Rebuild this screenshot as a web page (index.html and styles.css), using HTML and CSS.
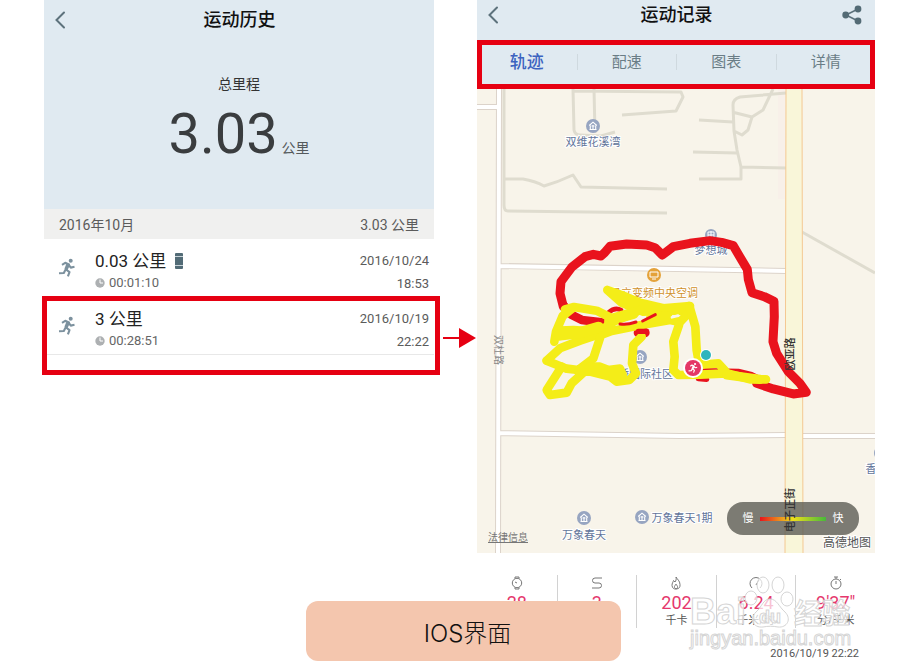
FILE: index.html
```html
<!DOCTYPE html>
<html lang="zh-CN">
<head>
<meta charset="utf-8">
<title>运动历史</title>
<link rel="stylesheet" href="styles.css">
</head>
<body>
<svg class="defs" aria-hidden="true">
  <defs>
    <symbol id="back" viewBox="0 0 12 18"><path d="M10 1.5 2.5 9l7.5 7.5" fill="none" stroke="#5d727c" stroke-width="2" stroke-linecap="round"/></symbol>
    <symbol id="runner" viewBox="0 0 18 20">
      <circle cx="12.7" cy="2.8" r="2" fill="currentColor"/>
      <path d="M4 6.8 7.2 4.8 11 6.5 8 11.5l3.5 2.7-1.6 4.2M10.8 7l2 2.6 3.7-.8M7.6 11.6 5.8 15 1 15.2" fill="none" stroke="currentColor" stroke-width="2.1" stroke-linejoin="round"/>
      <path d="M10 6.500 8 11.500" stroke="currentColor" stroke-width="3.400"/>
    </symbol>
    <symbol id="clock" viewBox="0 0 10 10"><circle cx="5" cy="5" r="4.7" fill="#adb0b2"/><path d="M5 1.5V5h3" fill="none" stroke="#fff" stroke-width="1"/></symbol>
    <symbol id="home" viewBox="0 0 14 14">
      <circle cx="7" cy="7" r="7" fill="#97a5c1"/>
      <path d="M3.2 6.5 7 3.2l3.8 3.3M4.3 6.5v4M7 6v4.500M9.700 6.500v4M3.500 10.500h7M5.500 7h3" fill="none" stroke="#fff" stroke-width="1.1"/>
    </symbol>
  </defs>
</svg>
<main class="stage">
  <section class="phone history">
    <div class="summary">
      <header class="bar">
        <button class="icon-button" aria-label="返回"><svg class="back"><use href="#back"/></svg></button>
        <h1>运动历史</h1>
        <span></span>
      </header>
      <p class="caption">总里程</p>
      <p class="total"><strong>3.03</strong> <span>公里</span></p>
    </div>
    <div class="month"><span>2016年10月</span><span>3.03 公里</span></div>
    <ul class="runs">
      <li class="run">
        <svg class="runner"><use href="#runner"/></svg>
        <div class="info">
          <p class="distance">0.03 公里
            <svg class="band" viewBox="0 0 8 16"><rect width="8" height="16" rx="1" fill="#526b76"/><path d="M0 3.500h8M0 12.500h8" stroke="#c8d3d8"/></svg>
          </p>
          <p class="time"><svg class="clock"><use href="#clock"/></svg>00:01:10</p>
        </div>
        <div class="when"><p class="date">2016/10/24</p><p class="hour">18:53</p></div>
      </li>
      <li class="run marked">
        <svg class="runner"><use href="#runner"/></svg>
        <div class="info">
          <p class="distance">3 公里</p>
          <p class="time"><svg class="clock"><use href="#clock"/></svg>00:28:51</p>
        </div>
        <div class="when"><p class="date">2016/10/19</p><p class="hour">22:22</p></div>
      </li>
    </ul>
  </section>

  <div class="link">
    <svg class="arrow" viewBox="0 0 33 20"><path d="M0 10h17" stroke="#e60012" stroke-width="2"/><path d="M16 0v20l17-10z" fill="#e60012"/></svg>
  </div>

  <section class="phone record">
    <header class="bar bar-record">
      <button class="icon-button" aria-label="返回"><svg class="back"><use href="#back"/></svg></button>
      <h2>运动记录</h2>
      <button class="icon-button" aria-label="分享">
        <svg class="share" viewBox="0 0 20 20"><path d="M16 4 4 10l12 6" fill="none" stroke="#5d727c" stroke-width="1.600"/><g fill="#536b75"><circle cx="16" cy="4" r="3.400"/><circle cx="3.700" cy="10" r="3.400"/><circle cx="16" cy="16" r="3.400"/></g></svg>
      </button>
    </header>
    <nav class="tabs">
      <button class="tab active">轨迹</button>
      <button class="tab">配速</button>
      <button class="tab">图表</button>
      <button class="tab">详情</button>
    </nav>
    <svg class="map" viewBox="477 89 398 464">
      <defs>
        <linearGradient id="speed"><stop offset="0" stop-color="#e8141c"/><stop offset=".5" stop-color="#efe01a"/><stop offset="1" stop-color="#46b93a"/></linearGradient>
      </defs>
      <rect x="477" y="89" width="398" height="464" fill="#f8f4ea"/>
      <rect x="778" y="89" width="7" height="110" fill="#f8f0e9"/>
      <g class="lane">
        <path d="M504 89v116q0 6 4 6l159 2M504 179h19q12 2 21 7 14-4 29-11l8 12 86 2"/>
        <path d="M573 89l1 41q1 5 6 5l21 1 14-4M594 89l1 44M574 91l107 1 2 5-7 14-54 4"/>
        <path d="M773 89l-10 21-11 7-20-5M786 93l-46 4q-7 2-7 8l1 26 8 4 6-5 4-13M699 120l34 2M734 131l3 19 4 17v12h-42M693 152l44 1M741 167l45 1"/>
        <path d="M802 232l73 41"/>
      </g>
      <g class="road-edge"><path d="M499 89 498 553M477 107h21M501 266l285 5M499 433l181 3 106-1M803 436h72"/></g>
      <g class="road"><path d="M499 89 498 553M477 107h21M499 266l287 5M498 433l182 3 106-1M802 436h73"/></g>
      <path d="M786 89h16l1 464h-18z" fill="#f9f6d9"/>
      <path d="M786 89 785 553M802 89l1 464" stroke="#f4c892" stroke-width="1"/>

      <g class="place">
        <use href="#home" x="586" y="119" width="14" height="14"/><text x="593" y="146">双维花溪湾</text>
        <circle cx="711" cy="235" r="6" fill="#97a5c1"/><path d="M708 232h6v6h-6zM711 231v7M708 235h6" stroke="#fff" fill="none"/>
        <text x="711" y="254">梦想城</text>
        <use href="#home" x="633" y="350" width="14" height="14"/><text x="640" y="378">天骄国际社区</text>
        <use href="#home" x="577" y="511" width="14" height="14"/><text x="584" y="539">万象春天</text>
        <use href="#home" x="635" y="510" width="14" height="14"/><text x="682" y="522">万象春天1期</text>
        <use href="#home" x="874" y="446" width="14" height="14"/><text x="871" y="473">香</text>
        <circle cx="654" cy="275" r="7" fill="#e4a23a"/><path d="M650 272h8v5h-8zM652 279h4" stroke="#fff" fill="none"/>
        <text class="shop" x="654" y="297">日立变频中央空调</text>
      </g>

      <g transform="translate(530 220) scale(.3333)" fill="none" stroke-linejoin="round" stroke-linecap="round">
        <g stroke="#e9131d" stroke-width="27">
          <path d="M100 260 90 220 93 185 125 142 165 110 190 103 213 108 224 98 240 79 290 72 350 75 375 83 397 105 430 80 480 70 540 62 575 67 610 77 628 108 652 148 655 178 666 218 703 230 732 244 733 290 729 365 740 400 775 455 810 490 829 517 790 522 730 507 680 490"/>
          <path d="M100 255 125 285 155 300 215 307" stroke-width="26"/>
          <path d="M235 278q20-18 38-8" stroke-width="14"/>
          <path d="M325 338h20" stroke-width="28"/>
          <path d="M525 452l100 2 40 10 40 20M505 476l25 2" stroke-width="16"/>
        </g>
        <g stroke="#f4ed18" stroke-width="26">
          <path d="M232 210 275 225 330 248 400 265 480 258 475 272 400 272 340 275 275 248z" fill="#f4ed18"/>
          <path d="M105 268 132 261 200 272 236 290 235 318 195 335 130 330 90 332M132 261 98 288 78 335 73 365"/>
          <path d="M50 422 90 385 150 362 215 340 250 305 330 270"/>
          <path d="M50 422 110 446 145 450 190 415 213 345 245 333 330 316 420 300 450 306 475 280"/>
          <path d="M95 440 50 510 60 525 110 518 125 490 180 440 210 440 235 450 270 446 278 465 240 470 180 455 145 455M225 458 260 485 298 480 318 460 306 430 310 375 335 350"/>
          <path d="M90 345 150 338 205 322M250 297 310 280M365 295 410 290" stroke-width="34"/>
          <path d="M478 258 496 320 500 390 508 435M447 315 430 365 434 410 430 450 445 465 510 464 590 460 660 478 708 478M505 435 565 430 588 455"/>
          <path d="M590 465 690 478" stroke-width="28"/>
        </g>
        <path d="M270 312q20 4 48-6M338 303l38-19" stroke="#e9131d" stroke-width="9"/>
        <path d="M325 334h24" stroke="#e9131d" stroke-width="16"/>
        <path d="M426 292l18-5" stroke="#f8f4ea" stroke-width="8"/>
      </g>
      <circle cx="706" cy="355" r="6" fill="#fff"/><circle cx="706" cy="355" r="5" fill="#2fb5bd"/>
      <circle cx="693" cy="368" r="10" fill="#fff"/><circle cx="693" cy="368" r="8" fill="#e43766"/>
      <use href="#runner" x="688" y="362" width="10" height="12" color="#fff"/>

      <rect x="727" y="502" width="132" height="33" rx="16" fill="#5c5c55" fill-opacity=".8"/>
      <rect x="760" y="517" width="66" height="4" fill="url(#speed)"/>
      <text class="speed" x="748" y="522">慢</text><text class="speed" x="838" y="522">快</text>
      <g class="street">
        <text transform="translate(794 354) rotate(-90)">欧亚路</text>
        <text transform="translate(794 510) rotate(-90)">电子正街</text>
        <text class="faint" transform="translate(495 350) rotate(90)">双杜路</text>
      </g>
      <a href="#legal"><text class="legal" x="488" y="541">法律信息</text></a>
      <text class="brand" x="823" y="547">高德地图</text>
    </svg>

    <div class="stats">
      <div class="stat"><svg class="glyph" viewBox="0 0 14 14"><circle cx="7" cy="7" r="4.700"/><path d="M5 2.500V1h4v1.500M5 11.500V13h4v-1.500M7 7 5 6"/></svg><b>28</b></div>
      <div class="stat"><svg class="glyph" viewBox="0 0 14 14"><path d="M12 2H5a2.500 2.500 0 0 0 0 5h4a2.500 2.500 0 0 1 0 5H2"/></svg><b>3</b></div>
      <div class="stat"><svg class="glyph" viewBox="0 0 14 14"><path d="M7 1c1 2 4 4 4 7.500a4 4 0 0 1-8 1C3 7 4 6.500 4.500 4.500L6 6c1-1 1.500-3 1-5zM7 13c-3-2-1-3 0-5 1 2 3 3 0 5"/></svg><b>202</b><span>千卡</span></div>
      <div class="stat"><svg class="glyph" viewBox="0 0 14 14"><path d="M3 12a6 6 0 1 1 8 0M7 9l3-5"/></svg><b>6.24</b><span>千米/时</span></div>
      <div class="stat"><svg class="glyph" viewBox="0 0 14 14"><circle cx="7" cy="8" r="5"/><path d="M5 1h4M7 1v2M7 5v3M11 3l1 1"/></svg><b>9'37"</b><span>分/千米</span></div>
      <svg class="watermark" viewBox="0 0 180 84">
        <g class="paw"><ellipse cx="63" cy="26" rx="6" ry="7"/><ellipse cx="75" cy="13" rx="6" ry="8"/><ellipse cx="90" cy="13" rx="6" ry="8"/><ellipse cx="99" cy="27" rx="6" ry="7"/><path d="M82 27c7 0 9 8 15 13 7 7 2 16-7 15-5-1-10-1-15 0-10 1-14-8-7-15 6-5 7-13 14-13z"/></g>
        <text class="logo" x="2" y="52">Bai</text>
        <text class="du" x="71" y="51">du</text>
        <text class="logo-cn" x="106" y="52">经验</text>
        <text class="site" x="2" y="73">jingyan.baidu.com</text>
      </svg>
    </div>
    <p class="stamp">2016/10/19 22:22</p>
  </section>
  <p class="platform">IOS界面</p>
</main>
</body>
</html>
```
FILE: styles.css
```css
* { box-sizing: border-box; }
body {
  margin: 0;
  background: #fff;
  color: #333;
  font-family: Roboto, "Noto Sans CJK SC", sans-serif;
}
h1, h2, p, ul { margin: 0; padding: 0; }
ul { list-style: none; }
button {
  border: 0;
  padding: 0;
  background: none;
  font-family: inherit;
}
svg { display: block; }
.defs { position: absolute; width: 0; height: 0; }

.stage {
  position: relative;
  display: grid;
  grid-template-columns: 390fr 43px 398fr;
  padding: 0 25px 0 44px;
  overflow: hidden;
}

/* Shared title bar */
.bar {
  display: grid;
  grid-template-columns: 32px 1fr 32px;
  align-items: center;
  height: 40px;
  padding: 0 7px 0 8px;
}
.bar h1, .bar h2 {
  color: #111;
  font-size: 18px;
  font-weight: 500;
  line-height: 24px;
  text-align: center;
}
.bar-record { padding-bottom: 10px; background: #e0eaf1; }
.icon-button { display: flex; justify-content: center; }
.bar .icon-button:first-child { justify-content: flex-start; padding-left: 2px; }
.back { width: 12px; height: 18px; }
.share { width: 20px; height: 20px; }

/* History */
.summary { height: 209px; background: #e0eaf1; text-align: center; }
.caption { margin-top: 34px; font-size: 14px; line-height: 20px; }
.total { margin-top: 8px; line-height: 64px; color: #54595c; }
.total strong { color: #3a3d3f; font-size: 56px; font-weight: 400; }
.total span { font-size: 14px; }
.month {
  display: flex;
  justify-content: space-between;
  align-items: center;
  height: 30px;
  padding: 0 15px;
  background: #f0f0ef;
  color: #5b5b5b;
  font-size: 14px;
}
.run {
  position: relative;
  display: flex;
  height: 58px;
  padding: 10px 5px 0 14px;
}
.runner { width: 18px; height: 20px; margin-top: 9px; color: #7c919e; }
.info { flex: 1; margin-left: 19px; }
.distance {
  display: flex;
  align-items: center;
  gap: 9px;
  color: #222;
  font-size: 17px;
  line-height: 24px;
}
.band { width: 8px; height: 16px; }
.time {
  display: flex;
  align-items: center;
  gap: 4px;
  color: #666;
  font-size: 13px;
  line-height: 20px;
}
.clock { width: 10px; height: 10px; }
.when { color: #5b5b5b; font-size: 13px; text-align: right; }
.date { line-height: 24px; }
.hour { line-height: 22px; }
.marked { border-bottom: 1px solid #e8e8e8; }
.marked::after {
  content: "";
  position: absolute;
  inset: -1px -6px -21px -2px;
  border: 5px solid #e60012;
}

.link { padding: 328px 1px 0 9px; }
.arrow { width: 33px; height: 20px; }

/* Record */
.tabs {
  position: relative;
  display: grid;
  grid-template-columns: repeat(4, 1fr);
  align-items: center;
  height: 49px;
  padding-bottom: 6px;
  background: #e0eaf1;
  outline: 5px solid #e60012;
  outline-offset: -5px;
}
.tab { height: 16px; color: #6a7d86; font-size: 15px; line-height: 16px; }
.tab + .tab { border-left: 1px solid #cfd9df; }
.tab.active { color: #3c63c0; font-size: 17px; font-weight: 500; }
.map { width: 100%; height: auto; }
.lane { fill: none; stroke: #dfdccf; stroke-width: 3; stroke-linejoin: round; }
.road-edge { fill: none; stroke: #dcd3ca; stroke-width: 6; }
.road { fill: none; stroke: #fff; stroke-width: 4; }
.place text {
  fill: #62749a;
  stroke: #fff;
  stroke-width: 2px;
  paint-order: stroke;
  font-size: 11px;
  text-anchor: middle;
}
.place .shop { fill: #d0912a; }
.speed { fill: #fff; font-size: 11px; text-anchor: middle; }
.street text { fill: #333; font-size: 11px; font-weight: 500; text-anchor: middle; }
.street .faint { fill: #888; font-size: 10px; font-weight: 400; }
.legal { fill: #777; font-size: 10px; text-decoration: underline; }
.brand { fill: #555; font-size: 12px; stroke: #fff; stroke-width: 2px; paint-order: stroke; }

.stats {
  position: relative;
  display: grid;
  grid-template-columns: repeat(5, 1fr);
  margin-top: 22px;
}
.stat {
  display: flex;
  flex-direction: column;
  align-items: center;
  height: 53px;
}
.stat + .stat { border-left: 1px solid #d2d2d2; }
.glyph { width: 14px; height: 14px; margin-top: 1px; fill: none; stroke: #777; stroke-width: 1; }
.stat b { color: #e5386d; font-size: 18px; font-weight: 400; line-height: 26px; }
.stat span { color: #555; font-size: 11px; line-height: 10px; }
.watermark { position: absolute; top: -3px; right: 7px; width: 180px; height: 84px; }
.watermark text, .paw { fill: #fff; fill-opacity: .7; stroke: #d5d5d5; stroke-width: 1; }
.watermark text { font-family: "Liberation Sans", "Noto Sans CJK SC", sans-serif; font-weight: 700; }
.logo { font-size: 36px; }
.logo-cn { font-size: 28px; }
.du { font-size: 18px; }
.watermark .site { font-size: 20px; font-weight: 400; }
.stamp {
  margin-top: 16px;
  padding-right: 16px;
  color: #555;
  font-size: 11px;
  line-height: 20px;
  text-align: right;
}

.platform {
  position: absolute;
  top: 601px;
  left: 34%;
  width: 35%;
  padding: 6px 8px 0 16px;
  border-radius: 12px;
  background: #f4c6ae;
  color: #111;
  font-family: Inter, "Noto Sans CJK SC", sans-serif;
  font-size: 24px;
  font-weight: 300;
  line-height: 54px;
  text-align: center;
}
```
